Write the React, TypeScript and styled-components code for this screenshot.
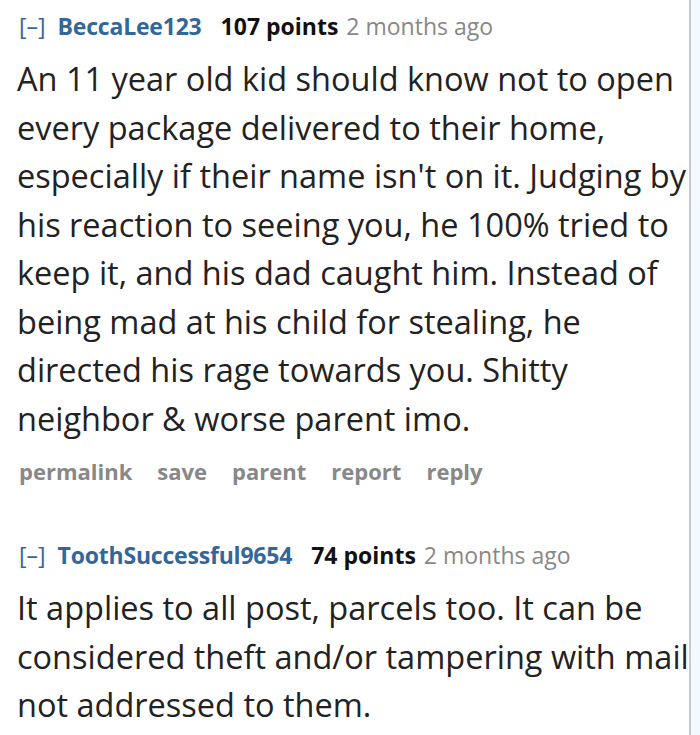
import React from "react";
import styled, { createGlobalStyle } from "styled-components";

const Global = createGlobalStyle`
  html, body { margin: 0; padding: 0; background: #fff; }
  body { font-family: "Open Sans", "Noto Sans", sans-serif; }
`;

const Page = styled.div`
  display: flex;
  width: 700px;
  height: 735px;
  overflow: hidden;
`;

const Main = styled.div`
  flex: 1;
  padding: 8px 0 0 17px;
  display: flex;
  flex-direction: column;
`;

const Strip = styled.div`
  width: 9px;
  border-left: 2px solid #c9c9c9;
  background: #f4f9ff;
`;

const Comment = styled.div<{ $gap?: number }>`
  display: flex;
  flex-direction: column;
  margin-bottom: ${(p) => p.$gap ?? 0}px;
`;

const Tagline = styled.div`
  display: flex;
  align-items: baseline;
  font-size: 23px;
  line-height: 36px;
  white-space: nowrap;
`;

const Toggle = styled.span`
  color: #336699;
  margin: 0 12px 0 2px;
`;

const Author = styled.span`
  color: #336699;
  font-weight: 700;
  letter-spacing: -0.2px;
  margin-right: 19px;
`;

const Score = styled.span`
  color: #111;
  font-weight: 700;
  margin-right: 8px;
`;

const Time = styled.span`
  color: #888;
`;

const Body = styled.div`
  color: #222;
  font-size: 32.5px;
  line-height: 48.5px;
  white-space: nowrap;
  margin-top: 11px;
`;

const Actions = styled.div`
  display: flex;
  gap: 25px;
  margin: 10px 0 0 2px;
  font-size: 22px;
  line-height: 36px;
  font-weight: 700;
  color: #888;
`;

const Action = styled.span``;

type CommentData = {
  author: string;
  points: string;
  lines: string[];
  actions?: boolean;
};

const comments: CommentData[] = [
  {
    author: "BeccaLee123",
    points: "107 points",
    lines: [
      "An 11 year old kid should know not to open",
      "every package delivered to their home,",
      "especially if their name isn't on it. Judging by",
      "his reaction to seeing you, he 100% tried to",
      "keep it, and his dad caught him. Instead of",
      "being mad at his child for stealing, he",
      "directed his rage towards you. Shitty",
      "neighbor & worse parent imo.",
    ],
    actions: true,
  },
  {
    author: "ToothSuccessful9654",
    points: "74 points",
    lines: [
      "It applies to all post, parcels too. It can be",
      "considered theft and/or tampering with mail",
      "not addressed to them.",
    ],
  },
];

export default function App() {
  return (
    <>
      <Global />
      <Page>
        <Main>
          {comments.map((c, i) => (
            <Comment key={c.author} $gap={i === 0 ? 48 : 0}>
              <Tagline>
                <Toggle>[–]</Toggle>
                <Author>{c.author}</Author>
                <Score>{c.points}</Score>
                <Time>2 months ago</Time>
              </Tagline>
              <Body>
                {c.lines.map((l, j) => (
                  <React.Fragment key={j}>
                    {l}
                    {j < c.lines.length - 1 && <br />}
                  </React.Fragment>
                ))}
              </Body>
              {c.actions && (
                <Actions>
                  {["permalink", "save", "parent", "report", "reply"].map((a) => (
                    <Action key={a}>{a}</Action>
                  ))}
                </Actions>
              )}
            </Comment>
          ))}
        </Main>
        <Strip />
      </Page>
    </>
  );
}
